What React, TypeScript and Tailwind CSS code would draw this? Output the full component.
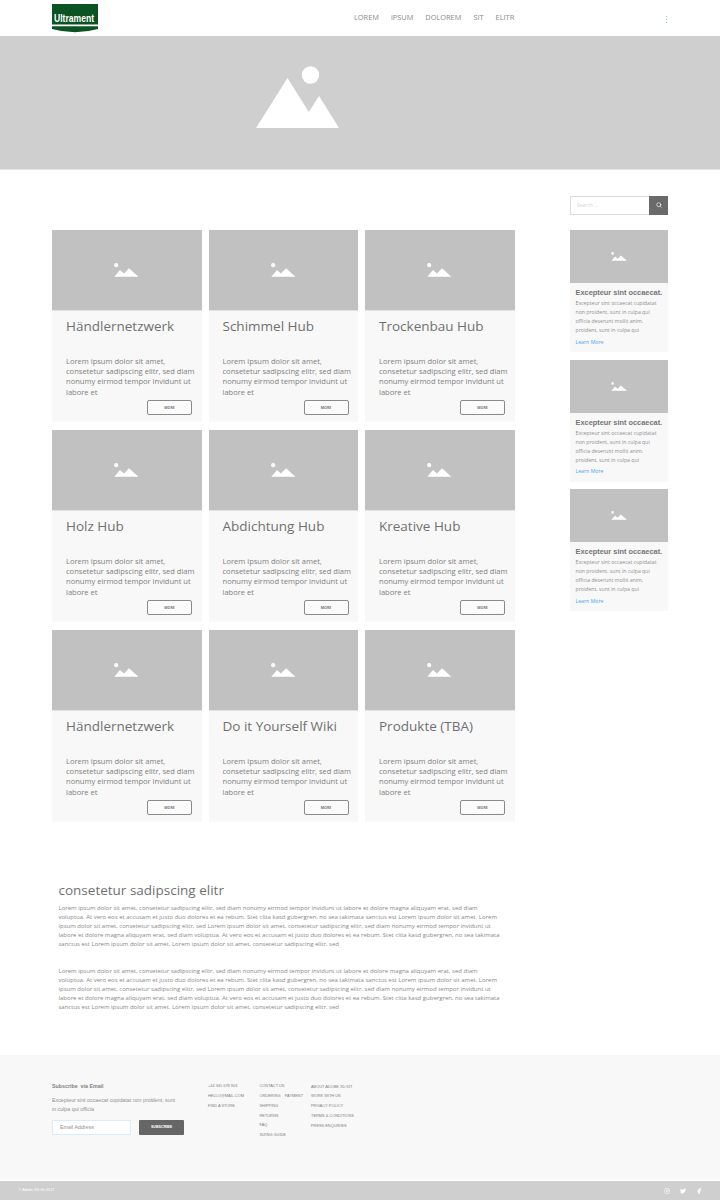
import React from 'react';
import { Search, Instagram, Twitter, Facebook } from 'lucide-react';

const hubs = [
    'Händlernetzwerk', 'Schimmel Hub', 'Trockenbau Hub',
    'Holz Hub', 'Abdichtung Hub', 'Kreative Hub',
    'Händlernetzwerk', 'Do it Yourself Wiki', 'Produkte (TBA)',
];

const lorem = 'Lorem ipsum dolor sit amet, consetetur sadipscing elitr, sed diam nonumy eirmod tempor invidunt ut labore et dolore magna aliquyam erat, sed diam voluptua. At vero eos et accusam et justo duo dolores et ea rebum. Stet clita kasd gubergren, no sea takimata sanctus est Lorem ipsum dolor sit amet. Lorem ipsum dolor sit amet, consetetur sadipscing elitr, sed Lorem ipsum dolor sit amet, consetetur sadipscing elitr, sed diam nonumy eirmod tempor invidunt ut labore et dolore magna aliquyam erat, sed diam voluptua. At vero eos et accusam et justo duo dolores et ea rebum. Stet clita kasd gubergren, no sea takimata sanctus est Lorem ipsum dolor sit amet. Lorem ipsum dolor sit amet, consetetur sadipscing elitr, sed';

// Placeholder picture: two peaks and a sun
const Mountains = ({ className }: { className: string }) => (
    <svg viewBox="0 0 83 63" className={className} fill="white">
        <circle cx="54.5" cy="9" r="8.7" />
        <path d="M0 62 L31.5 12 L52.8 46 L63 30 L83 62 Z" />
    </svg>
);

const SmallMountains = ({ className }: { className: string }) => (
    <svg viewBox="0 0 25 14" className={className} fill="white">
        <circle cx="2.2" cy="2.2" r="2.1" />
        <path d="M0.3 13.7 L6 7 L10 10.6 L15 5.3 L24.5 13.7 Z" />
    </svg>
);

const HubCard = ({ title }: { title: string }) => (
    <div className="h-[192px] bg-[#f8f8f8] flex flex-col">
        <div className="h-[81px] bg-[#c1c1c1] border-b border-[#e2e2e2] flex items-center justify-center">
            <SmallMountains className="w-[25px] h-[14px] mt-[-1px]" />
        </div>
        <div className="px-[14px] flex-1 relative">
            <h2 className="mt-[5px] text-[13.5px] leading-[20px] text-[#707070]">{title}</h2>
            <p className="mt-[20px] w-[134px] text-[7.55px] leading-[10.2px] text-[#808080]">
                Lorem ipsum dolor sit amet, consetetur sadipscing elitr, sed diam nonumy eirmod tempor invidunt ut labore et
            </p>
            <button className="absolute right-[9.5px] bottom-[7px] w-[45px] h-[15px] border border-[#8a8a8a] rounded-[2px] bg-[#fbfbfb] text-[3.5px] font-bold text-[#777777] uppercase">
                More
            </button>
        </div>
    </div>
);

const SideCard = () => (
    <div className="h-[122px] bg-[#f8f8f8]">
        <div className="h-[53px] bg-[#c1c1c1] flex items-center justify-center">
            <SmallMountains className="w-[16.5px] h-[9px]" />
        </div>
        <div className="pl-[5.5px] pr-[3px]">
            <h3 className="pt-[5.3px] text-[7.4px] leading-[10px] font-bold text-[#757575] whitespace-nowrap font-['Liberation_Sans',sans-serif]">Excepteur sint occaecat.</h3>
            <p className="mt-[1px] text-[5.2px] leading-[9px] text-[#909090]">
                Excepteur sint occaecat cupidatat non proident, sunt in culpa qui officia deserunt mollit anim. proident, sunt in culpa qui
            </p>
            <a className="block mt-[2.5px] text-[5.2px] leading-[9px] text-[#4ba6f2]">Learn More</a>
        </div>
    </div>
);

const FooterLinks = ({ items, className }: { items: string[]; className: string }) => (
    <ul className={className}>
        {items.map(item => (
            <li key={item} className="h-[9.85px] leading-[9.85px] whitespace-pre">{item}</li>
        ))}
    </ul>
);

const App = () => {
    return (
        <div className="w-[720px] h-[1200px] bg-white overflow-hidden font-['Open_Sans',sans-serif]">
            {/* Top nav */}
            <header className="h-[36px] flex items-start pl-[52px]">
                <div className="mt-[4px] w-[46px] h-[29px] relative shrink-0">
                    <svg viewBox="0 0 46 29" className="w-[46px] h-[29px]">
                        <rect x="0" y="0" width="46" height="20.5" fill="#0b5323" />
                        <path d="M0 22.3 H46 V25 Q23 31.5 0 25 Z" fill="#0b5323" />
                    </svg>
                    <span className="absolute left-[2px] top-[9.5px] text-[10px] leading-[10px] font-bold text-white font-['Liberation_Sans',sans-serif] whitespace-nowrap origin-left scale-x-[0.86]">Ultrament</span>
                </div>
                <nav className="ml-[256px] h-[36px] flex items-center gap-[12px] text-[7.4px] text-[#8a8a8a]">
                    <span>LOREM</span>
                    <span>iPSUM</span>
                    <span>DOLOREM</span>
                    <span>SIT</span>
                    <span>ELITR</span>
                </nav>
                <div className="ml-auto mr-[53.5px] mt-[15.5px] flex flex-col gap-[1.5px]">
                    <span className="w-[1px] h-[1.5px] bg-[#7cc0f7]" />
                    <span className="w-[1px] h-[1.5px] bg-[#7cc0f7]" />
                    <span className="w-[1px] h-[1.5px] bg-[#7cc0f7]" />
                </div>
            </header>

            {/* Hero */}
            <section className="h-[134px] bg-[#cfcfcf] border-b border-[#e6e6e6] flex justify-center">
                <Mountains className="w-[83px] h-[63px] mt-[29.5px] ml-[-126px]" />
            </section>

            {/* Cards and sidebar */}
            <main className="flex pl-[52px] pt-[26px]">
                <div className="w-[462.5px] pt-[34px] grid grid-cols-3 gap-x-[7px] gap-y-[8px] h-fit">
                    {hubs.map((title, i) => (
                        <HubCard key={i} title={title} />
                    ))}
                </div>
                <aside className="ml-[55.5px] w-[98px]">
                    <div className="h-[19px] flex border-[1.5px] border-r-0 border-[#dcdcdc] box-border">
                        <div className="flex-1 bg-white text-[5px] leading-[16px] pl-[6px] text-[#d4d4d4]">Search ...</div>
                        <div className="w-[19px] h-[19px] mt-[-1.5px] bg-[#6a6a6a] flex items-center justify-center">
                            <Search className="w-[6px] h-[6px] text-white" strokeWidth={2.5} />
                        </div>
                    </div>
                    <div className="mt-[15px] flex flex-col gap-[7.5px]">
                        <SideCard />
                        <SideCard />
                        <SideCard />
                    </div>
                </aside>
            </main>

            {/* Long text */}
            <section className="pl-[58.5px] w-[503px] mt-[58px] text-[#888888]">
                <h2 className="text-[13.5px] leading-[20px] text-[#707070]">consetetur sadipscing elitr</h2>
                <p className="mt-[4px] text-[6px] leading-[9px]">{lorem}</p>
                <p className="mt-[18px] text-[6px] leading-[9px]">{lorem}</p>
            </section>

            {/* Footer */}
            <footer className="mt-[43px] h-[125px] bg-[#f8f8f8] flex pl-[52px] pt-[27px] font-['Liberation_Sans',sans-serif] text-[#808080]">
                <div className="w-[156px]">
                    <h4 className="text-[5.3px] leading-[8px] font-bold text-[#808080] whitespace-pre">Subscribe  via Email</h4>
                    <p className="mt-[5.5px] w-[127px] text-[5.3px] leading-[9px] text-[#909090]">
                        Excepteur sint occaecat cupidatat non proident, sunt in culpa qui officia
                    </p>
                    <div className="mt-[6.5px] flex gap-[8px]">
                        <div className="w-[79px] h-[15px] bg-white border border-[#d8ecfb] pl-[7px] text-[5.3px] leading-[13px] text-[#909090]">Email Address</div>
                        <button className="w-[45px] h-[15px] bg-[#666666] rounded-[1px] text-[3.6px] font-bold text-white uppercase">Subscribe</button>
                    </div>
                </div>
                <FooterLinks className="w-[51.5px] mt-[-1px] text-[3.9px] uppercase text-[#808080]" items={['+44 345 678 903', 'Hello@mail.com', 'Find a store']} />
                <FooterLinks className="w-[51.5px] mt-[-1px] text-[3.9px] uppercase text-[#808080]" items={['Contact us', 'Ordering    Payment', 'Shipping', 'Returns', 'FAQ', 'Sizing guide']} />
                <FooterLinks className="mt-[-0.5px] text-[3.9px] uppercase text-[#808080]" items={['About Adobe XD Kit', 'Work with us', 'Privacy policy', 'Terms & conditions', 'Press enquiries']} />
            </footer>

            {/* Bottom bar */}
            <div className="mt-[1px] h-[19px] bg-[#cfcfcf] flex items-center pl-[18.5px] text-white font-['Liberation_Sans',sans-serif]">
                <span className="text-[3.8px]">© Adobe XD Kit 2017</span>
                <div className="ml-auto mr-[18px] flex items-center gap-[10px]">
                    <Instagram className="w-[6px] h-[6px]" />
                    <Twitter className="w-[6px] h-[6px]" fill="white" />
                    <Facebook className="w-[6px] h-[6px]" fill="white" />
                </div>
            </div>
        </div>
    );
};

export default App;
